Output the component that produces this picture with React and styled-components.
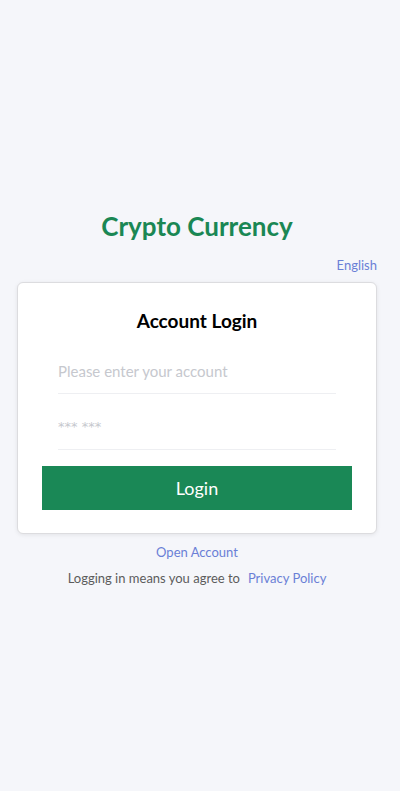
import React from "react";
import styled, { createGlobalStyle } from "styled-components";

const Global = createGlobalStyle`
  html, body { margin: 0; padding: 0; background: #f5f6fa; }
  body { font-family: Lato, "Noto Sans", sans-serif; }
  * { box-sizing: border-box; }
`;

const Page = styled.div`
  min-height: 791px;
  display: flex;
  flex-direction: column;
  padding: 208px 23px 0 17px;
`;

const Title = styled.h1`
  margin: 0;
  text-align: center;
  color: #1a8754;
  font-size: 26px;
  font-weight: 700;
  line-height: 36px;
`;

const LangRow = styled.div`
  display: flex;
  justify-content: flex-end;
  margin-top: 10px;
  height: 22px;
`;

const Link = styled.a`
  color: #6a7fd6;
  font-size: 13px;
  line-height: 22px;
  text-decoration: none;
  cursor: pointer;
`;

const Card = styled.div`
  margin-top: 6px;
  background: #fff;
  border: 1px solid #dcdcdf;
  border-radius: 6px;
  box-shadow: 0 1px 4px rgba(0, 0, 0, 0.08);
  padding: 26px 24px 23px;
  display: flex;
  flex-direction: column;
`;

const CardTitle = styled.h2`
  margin: 0;
  text-align: center;
  font-size: 19px;
  font-weight: 700;
  color: #000;
  line-height: 24px;
`;

const Field = styled.input`
  margin: ${(p) => p.$top}px 16px 0;
  height: 46px;
  border: none;
  border-bottom: 1px solid #eeeff2;
  outline: none;
  font-family: ${(p) => (p.$stars ? '"DejaVu Sans", sans-serif' : "inherit")};
  font-size: ${(p) => (p.$stars ? "13px" : "15px")};
  padding: 0;
  color: #333;
  background: transparent;
  &::placeholder { color: #c6c8ce; }
`;

const Button = styled.button`
  margin-top: 16px;
  height: 44px;
  border: none;
  background: #1a8856;
  color: #fff;
  font-family: inherit;
  font-size: 18px;
  cursor: pointer;
`;

const Footer = styled.div`
  display: flex;
  flex-direction: column;
  align-items: center;
  margin-top: 7px;
  gap: 4px;
`;

const Agree = styled.div`
  font-size: 13px;
  color: #5c5c5c;
  line-height: 22px;
  display: flex;
  gap: 8px;
`;

export default function App() {
  return (
    <>
      <Global />
      <Page>
        <Title>Crypto Currency</Title>
        <LangRow>
          <Link>English</Link>
        </LangRow>
        <Card>
          <CardTitle>Account Login</CardTitle>
          <Field $top={15} placeholder="Please enter your account" />
          <Field $top={10} $stars type="password" placeholder="*** ***" />
          <Button>Login</Button>
        </Card>
        <Footer>
          <Link>Open Account</Link>
          <Agree>
            <span>Logging in means you agree to</span>
            <Link>Privacy Policy</Link>
          </Agree>
        </Footer>
      </Page>
    </>
  );
}
